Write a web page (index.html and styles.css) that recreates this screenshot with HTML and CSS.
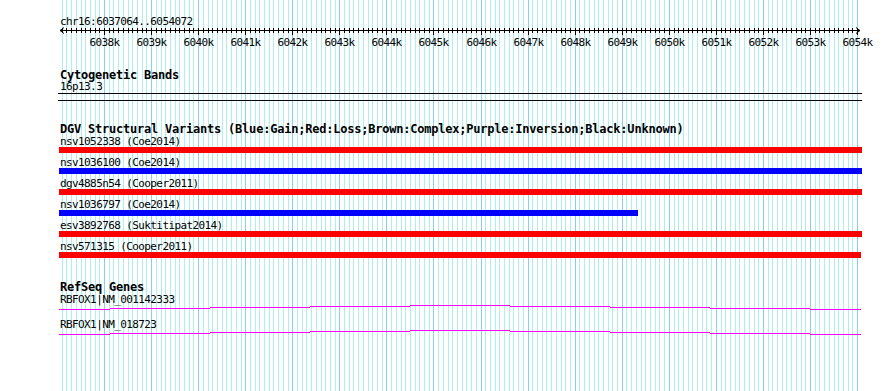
FILE: index.html
```html
<!DOCTYPE html>
<html lang="en">
<head>
    <meta charset="UTF-8" />
    <title>chr16:6037064..6054072</title>
    <link rel="stylesheet" href="styles.css">
</head>
<body>
<div class="panel">
    <svg class="grid" id="grid" width="890" height="391"></svg>

    <div class="ruler">
        <div class="ref-name">chr16:6037064..6054072</div>
        <svg class="scale" id="scale" width="890" height="24"></svg>
    </div>

    <div class="track cyto">
        <div class="track-title">Cytogenetic Bands</div>
        <div class="label">16p13.3</div>
        <div class="band"></div>
    </div>

    <div class="track dgv">
        <div class="track-title">DGV Structural Variants (Blue:Gain;Red:Loss;Brown:Complex;Purple:Inversion;Black:Unknown)</div>
        <div class="feature">
            <div class="label">nsv1052338 (Coe2014)</div>
            <div class="bar loss" style="width: 803px"></div>
        </div>
        <div class="feature">
            <div class="label">nsv1036100 (Coe2014)</div>
            <div class="bar gain" style="width: 803px"></div>
        </div>
        <div class="feature">
            <div class="label">dgv4885n54 (Cooper2011)</div>
            <div class="bar loss" style="width: 803px"></div>
        </div>
        <div class="feature">
            <div class="label">nsv1036797 (Coe2014)</div>
            <div class="bar gain" style="width: 579px"></div>
        </div>
        <div class="feature">
            <div class="label">esv3892768 (Suktitipat2014)</div>
            <div class="bar loss" style="width: 803px"></div>
        </div>
        <div class="feature">
            <div class="label">nsv571315 (Cooper2011)</div>
            <div class="bar loss" style="width: 802px"></div>
        </div>
    </div>

    <div class="track refseq">
        <div class="track-title">RefSeq Genes</div>
        <div class="gene">
            <div class="label">RBFOX1|NM_001142333</div>
            <svg class="intron" width="890" height="5"></svg>
        </div>
        <div class="gene">
            <div class="label">RBFOX1|NM_018723</div>
            <svg class="intron" width="890" height="5"></svg>
        </div>
    </div>
</div>

<script src="script.js"></script>
</body>
</html>
```

FILE: styles.css
```css
body {
    margin: 0;
    background: #fff;
}
.panel {
    position: relative;
    z-index: 0;
    width: 890px;
    height: 391px;
    overflow: hidden;
    font-family: "DejaVu Sans Mono", "Liberation Mono", monospace;
    color: #000;
}
.grid {
    position: absolute;
    left: 0;
    top: 0;
    z-index: -1;
}
.ruler {
    height: 50px;
}
.ref-name,
.label {
    padding-left: 60px;
    font-size: 11px;
    line-height: 11px;
    height: 11px;
    letter-spacing: -0.6px;
    white-space: nowrap;
}
.ref-name {
    padding-top: 16px;
}
.scale {
    display: block;
    margin-top: -1px;
}
.scale text {
    font-family: "DejaVu Sans Mono", "Liberation Mono", monospace;
    font-size: 11px;
    letter-spacing: -0.6px;
}
.track-title {
    padding-left: 60px;
    font-size: 12px;
    font-weight: bold;
    line-height: 12px;
    height: 12px;
    letter-spacing: -0.22px;
    white-space: nowrap;
}
.cyto {
    margin-top: 19px;
}
.band {
    margin: 1px 28px 0 58px;
    height: 6px;
    border-top: 1px solid #000;
    border-bottom: 1px solid #000;
}
.dgv {
    margin-top: 22px;
}
.dgv .track-title {
    height: 13px;
}
.feature {
    margin-bottom: 4px;
}
.bar {
    height: 6px;
    margin-left: 59px;
}
.loss {
    background-color: #ff0000;
}
.gain {
    background-color: #0000ff;
}
.refseq {
    padding-top: 19px;
}
.refseq .track-title {
    height: 13px;
}
.gene {
    margin-bottom: 9px;
}
.intron {
    display: block;
}
```

FILE: script.js
```js
const viewStart = 6037064;
const viewEnd = 6054072;
const left = 60;
const pxPerBp = 0.0470625;
const svgNS = 'http://www.w3.org/2000/svg';

function xOf(pos) {
    return left + (pos - viewStart) * pxPerBp;
}

function add(parent, tag, attrs, text) {
    const el = document.createElementNS(svgNS, tag);
    for (const k in attrs) el.setAttribute(k, attrs[k]);
    if (text) el.textContent = text;
    parent.appendChild(el);
    return el;
}

// grid lines every 100bp, darker every 1kb
const grid = document.getElementById('grid');
for (let p = Math.ceil(viewStart / 100) * 100; p <= viewEnd; p += 100) {
    const x = Math.round(xOf(p)) + 0.5;
    add(grid, 'line', {
        x1: x, x2: x, y1: 0, y2: 391,
        stroke: p % 1000 === 0 ? '#87cefa' : '#afeeee',
        'shape-rendering': 'crispEdges'
    });
}

// ruler with arrows, ticks and kb labels
const scale = document.getElementById('scale');
const y = 4.5;
const right = Math.round(xOf(viewEnd));
add(scale, 'line', { x1: left, x2: right, y1: y, y2: y, stroke: '#000', 'shape-rendering': 'crispEdges' });
add(scale, 'polyline', { points: `${left + 4},${y - 3} ${left},${y} ${left + 4},${y + 3}`, fill: 'none', stroke: '#000' });
add(scale, 'polyline', { points: `${right - 4},${y - 3} ${right},${y} ${right - 4},${y + 3}`, fill: 'none', stroke: '#000' });
for (let p = Math.ceil(viewStart / 100) * 100; p <= viewEnd; p += 100) {
    const x = Math.round(xOf(p)) + 0.5;
    const major = p % 1000 === 0;
    add(scale, 'line', {
        x1: x, x2: x, y1: 2, y2: major ? 9 : 7,
        stroke: '#000', 'shape-rendering': 'crispEdges'
    });
    if (major) {
        add(scale, 'text', { x: x, y: 20, 'text-anchor': 'middle' }, (p / 1000) + 'k');
    }
}

// intron lines: flat hat, 1px step every 100px, peak at the view centre
const steps = [[59, 110, 4], [110, 210, 3], [210, 310, 2], [310, 410, 1], [410, 510, 0],
               [510, 610, 1], [610, 710, 2], [710, 810, 3], [810, 861, 4]];
document.querySelectorAll('.intron').forEach(svg => {
    steps.forEach(([x1, x2, dy]) => {
        add(svg, 'rect', { x: x1, y: dy, width: x2 - x1, height: 1, fill: '#ff00ff' });
    });
});
```
